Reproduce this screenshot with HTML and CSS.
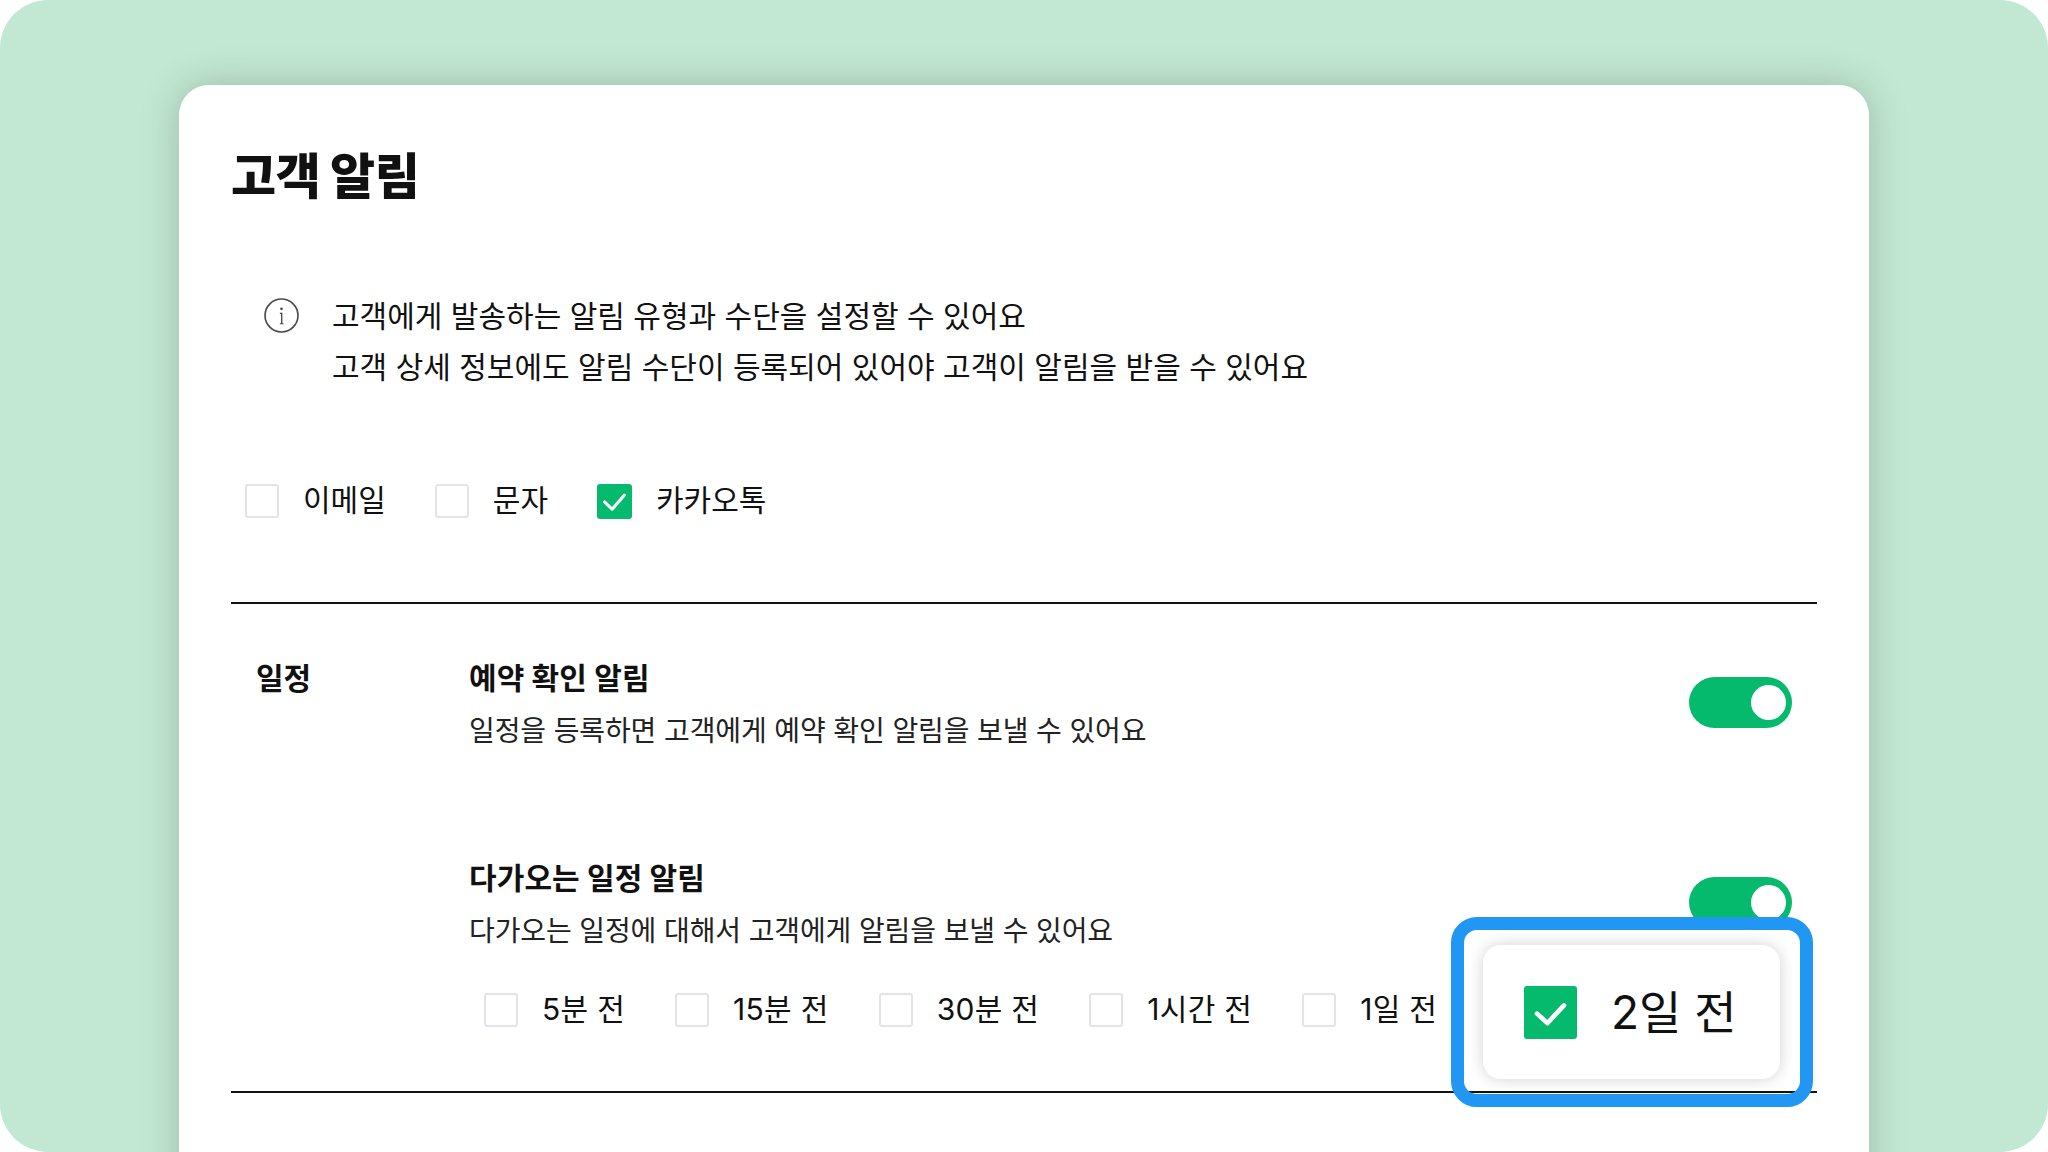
FILE: index.html
```html
<!DOCTYPE html>
<html lang="ko">
<head>
<meta charset="utf-8">
<title>고객 알림</title>
<link rel="stylesheet" href="styles.css">
</head>
<body>
<div class="screen">
  <main class="card">
    <h1 class="title">고객 알림</h1>
    <div class="notice">
      <svg class="info" viewBox="0 0 34 34" fill="none"><circle cx="17" cy="17" r="16" stroke="#4a4a4a" stroke-width="1.6"/><circle cx="17" cy="10.5" r="1.3" fill="#4a4a4a"/><path d="M15.4 15h1.8v10" stroke="#4a4a4a" stroke-width="1.3"/><path d="M15.4 25h3.6" stroke="#4a4a4a" stroke-width="1"/></svg>
      <p class="notice-text">고객에게 발송하는 알림 유형과 수단을 설정할 수 있어요<br>고객 상세 정보에도 알림 수단이 등록되어 있어야 고객이 알림을 받을 수 있어요</p>
    </div>
    <div class="channels">
      <label class="opt"><span class="box"></span>이메일</label>
      <label class="opt"><span class="box"></span>문자</label>
      <label class="opt"><span class="box on"><svg viewBox="0 0 24 24" fill="none"><path d="M5.2 12.3l5.2 5 8.3-9.6" stroke="#fff" stroke-width="2.1" stroke-linecap="round" stroke-linejoin="round"/></svg></span>카카오톡</label>
    </div>
    <section class="section">
      <h2 class="section-label">일정</h2>
      <div class="rows">
        <div class="row">
          <div>
            <h3 class="row-title">예약 확인 알림</h3>
            <p class="row-desc">일정을 등록하면 고객에게 예약 확인 알림을 보낼 수 있어요</p>
          </div>
          <span class="toggle"><span class="knob"></span></span>
        </div>
        <div class="row second">
          <div>
            <h3 class="row-title">다가오는 일정 알림</h3>
            <p class="row-desc">다가오는 일정에 대해서 고객에게 알림을 보낼 수 있어요</p>
          </div>
          <span class="toggle"><span class="knob"></span></span>
        </div>
        <div class="times">
          <label class="opt"><span class="box"></span>5분 전</label>
          <label class="opt"><span class="box"></span>15분 전</label>
          <label class="opt"><span class="box"></span>30분 전</label>
          <label class="opt"><span class="box"></span>1시간 전</label>
          <label class="opt"><span class="box"></span>1일 전</label>
        </div>
      </div>
    </section>
  </main>
  <div class="callout">
    <div class="callout-card">
      <span class="box big on"><svg viewBox="0 0 24 24" fill="none"><path d="M5.9 12.5l4.7 4.3 7.5-8" stroke="#fff" stroke-width="2.1" stroke-linecap="round" stroke-linejoin="round"/></svg></span>
      <span class="callout-text">2일 전</span>
    </div>
  </div>
</div>
</body>
</html>
```
FILE: styles.css
```css
* { box-sizing: border-box; }
html, body { margin: 0; padding: 0; background: #fff; }
body { font-family: Inter, "Noto Sans CJK KR", "Noto Sans", sans-serif; color: #111; }
h1, h2, h3, p { margin: 0; }

.screen {
  position: relative;
  width: 2048px;
  height: 1152px;
  padding: 85px 0 0 179px;
  background: #c2e8d3;
  border-radius: 48px;
  overflow: hidden;
}
.card {
  width: 1690px;
  height: 1200px;
  padding: 57px 52px 0;
  background: #fff;
  border-radius: 30px;
  box-shadow: 0 0 40px rgba(0, 0, 0, .2);
}
.title { font-size: 49px; line-height: 70px; font-weight: 900; letter-spacing: -.3px; }

.notice { display: flex; gap: 33px; margin-top: 79px; padding-left: 33px; }
.info { width: 35px; height: 35px; margin-top: 7px; flex: none; }
.notice-text { font-size: 30px; line-height: 51px; }

.channels { display: flex; gap: 49px; margin-top: 91px; padding-left: 14px; }
.opt { display: flex; align-items: flex-start; gap: 24px; height: 34px; font-size: 30px; line-height: 32px; white-space: nowrap; }
.box { display: block; flex: none; width: 34px; height: 34px; background: #fff; border: 2px solid #e3e4ea; border-radius: 3px; }
.box.on { width: 35px; height: 35px; background: #05ba6c; border: 0; }
.box svg { display: block; width: 100%; height: 100%; }

.section { display: flex; margin-top: 84px; padding: 54px 25px 64px; border-top: 2px solid #111; border-bottom: 2px solid #111; }
.section-label { width: 213px; flex: none; font-size: 30px; line-height: 40px; font-weight: 700; }
.rows { flex: 1; }
.row { display: flex; justify-content: space-between; align-items: flex-start; }
.row.second { margin-top: 107px; }
.row-title { font-size: 30px; line-height: 40px; font-weight: 700; letter-spacing: .1px; }
.row-desc { margin-top: 13px; font-size: 28px; line-height: 40px; color: #222; letter-spacing: -.12px; }
.toggle { display: flex; align-items: center; justify-content: flex-end; width: 103px; height: 51px; margin-top: 19px; padding-right: 6px; background: #05ba6c; border-radius: 26px; }
.knob { width: 35px; height: 35px; background: #fff; border-radius: 50%; }
.times { display: flex; gap: 50px; margin-top: 42px; padding-left: 15px; letter-spacing: .3px; }

.callout {
  position: absolute;
  left: 1451px;
  top: 917px;
  width: 362px;
  height: 190px;
  padding: 15px 20px 15px 19px;
  border: 13px solid #2196f3;
  border-radius: 26px;
}
.callout-card {
  display: flex;
  align-items: center;
  gap: 34px;
  height: 134px;
  padding-left: 41px;
  background: #fff;
  border-radius: 18px;
  box-shadow: 0 0 16px rgba(0, 0, 0, .18);
}
.box.big { width: 53px; height: 53px; }
.callout-text { font-size: 46px; line-height: 56px; }
```
